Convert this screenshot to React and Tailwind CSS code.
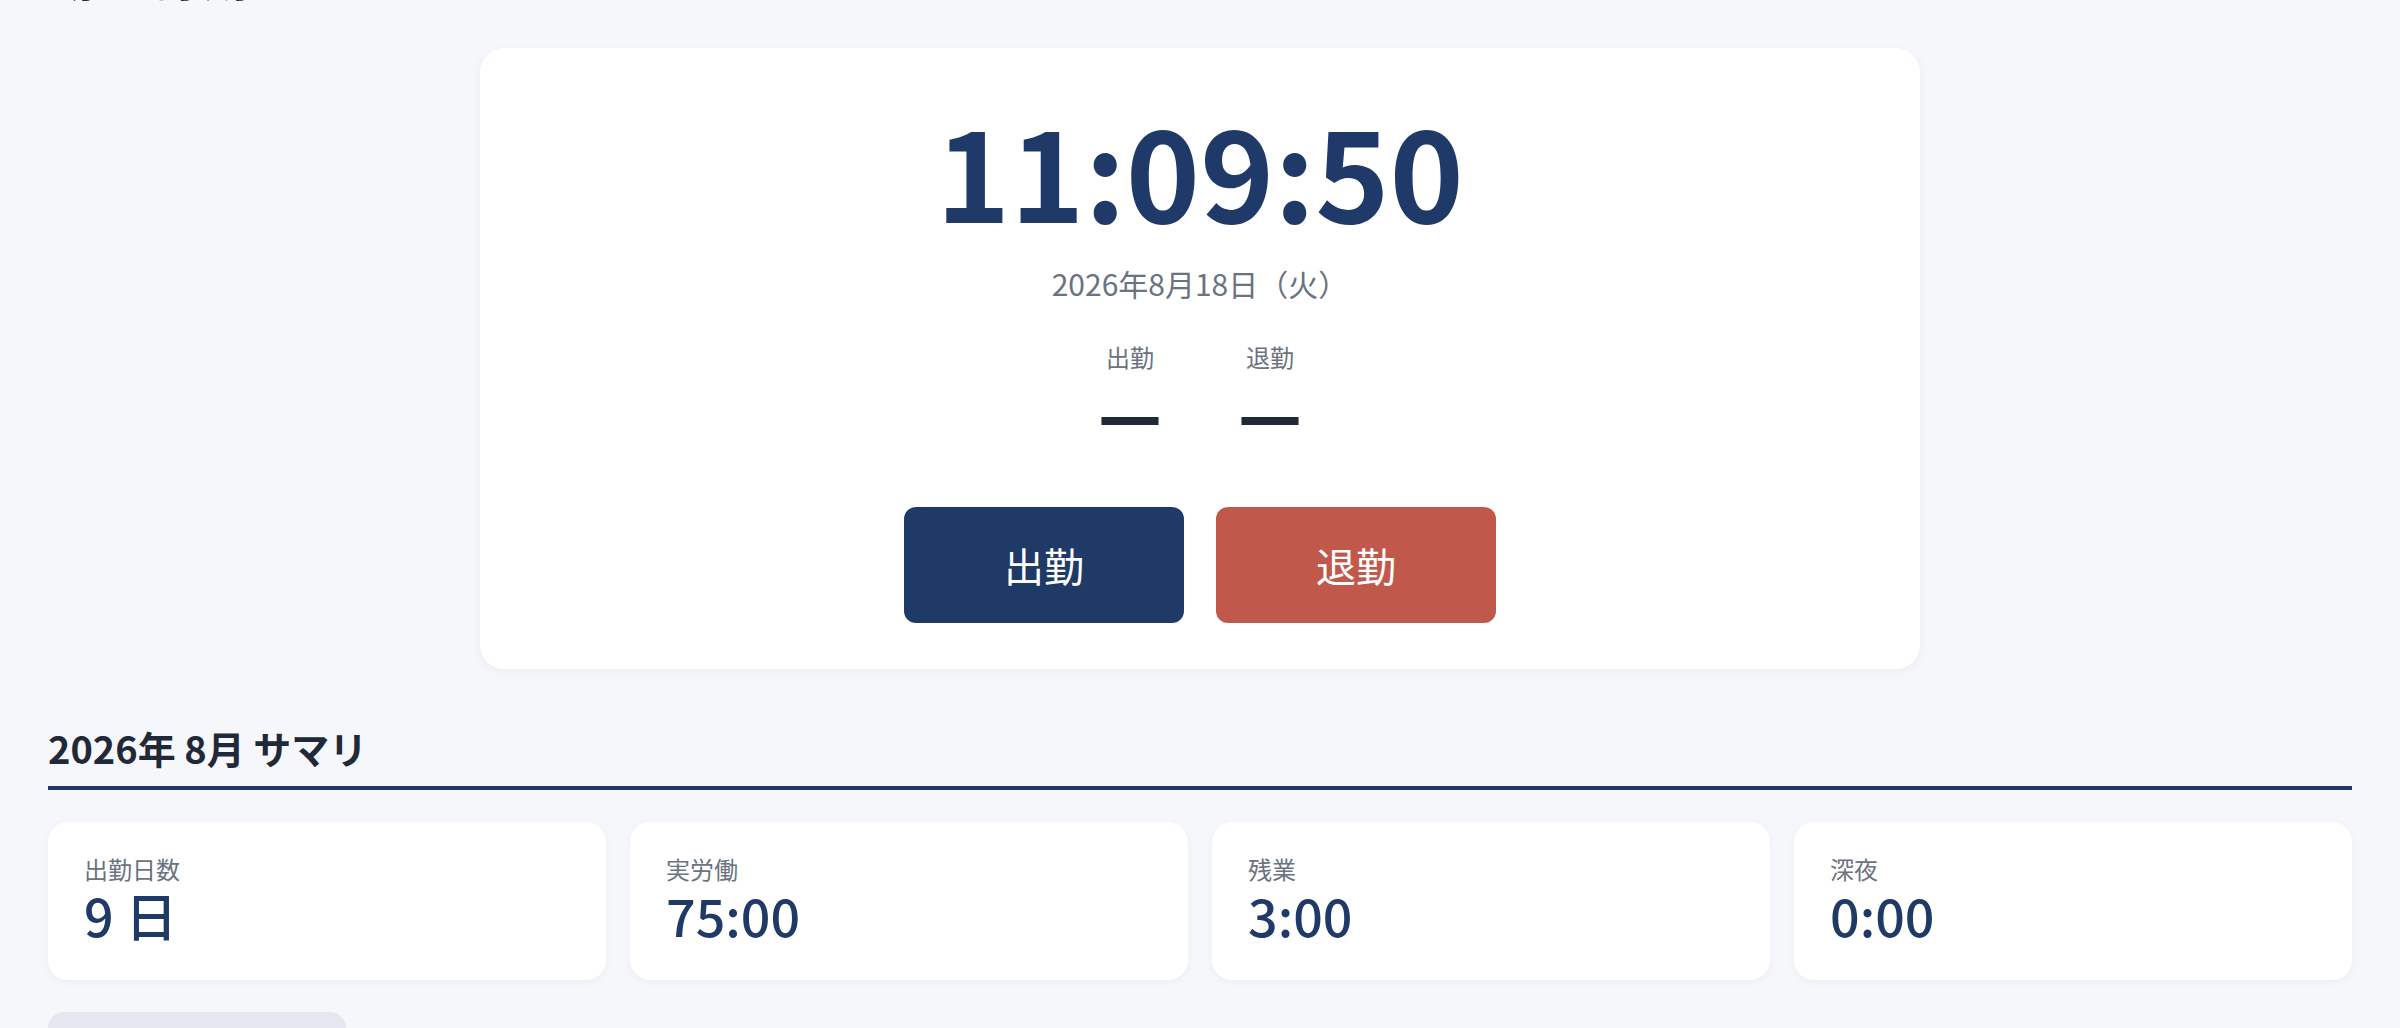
import React from "react";

const summary = [
  { label: "出勤日数", value: "9 日" },
  { label: "実労働", value: "75:00" },
  { label: "残業", value: "3:00" },
  { label: "深夜", value: "0:00" },
];

export default function App() {
  return (
    <div className="h-[1028px] overflow-hidden bg-[#f6f7fa] font-['Noto_Sans_CJK_JP',sans-serif]">
      <div className="px-12">
        <h1 className="-mt-[49px] text-[48px] leading-none font-bold text-[#1f2937]">勤怠 打刻</h1>
        <div className="mx-auto mt-[49px] flex w-[1440px] flex-col items-center rounded-[24px] bg-white pt-[57px] pb-[46px] shadow-[0_2px_10px_rgba(15,23,42,0.05)]">
          <div className="text-[126px] leading-none font-bold text-[#1f3a68]">11:09:50</div>
          <div className="mt-[31px] text-[30px] leading-[42px] text-[#6b7280]">2026年8月18日（火）</div>
          <div className="mt-[35px] flex gap-[76px]">
            {["出勤", "退勤"].map((l) => (
              <div key={l} className="flex flex-col items-center">
                <div className="text-[24px] leading-[36px] text-[#6b7280]">{l}</div>
                <div className="mt-[9px] font-['DejaVu_Sans',sans-serif] text-[64px] leading-[67px] font-bold text-[#1f2937]">—</div>
              </div>
            ))}
          </div>
          <div className="mt-[56px] flex gap-8">
            <button className="h-[116px] w-[280px] rounded-[12px] bg-[#203a68] text-[40px] text-white">出勤</button>
            <button className="h-[116px] w-[280px] rounded-[12px] bg-[#c0594c] text-[40px] text-white">退勤</button>
          </div>
        </div>
        <section className="mt-[51px]">
          <h2 className="border-b-4 border-[#203a68] pb-[10px] text-[38px] leading-[56px] font-bold text-[#1f2937]">2026年 8月 サマリ</h2>
          <div className="mt-8 grid grid-cols-4 gap-6">
            {summary.map((s) => (
              <div key={s.label} className="h-[158px] rounded-[20px] bg-white px-9 pt-[32px] shadow-[0_2px_8px_rgba(15,23,42,0.04)]">
                <div className="text-[24px] leading-[30px] text-[#6b7280]">{s.label}</div>
                <div className="mt-[3px] text-[52px] leading-[56px] font-medium text-[#203a68]">{s.value}</div>
              </div>
            ))}
          </div>
          <div className="mt-8 h-[64px] w-[298px] rounded-[16px] bg-[#e4e7ef]" />
        </section>
      </div>
    </div>
  );
}
